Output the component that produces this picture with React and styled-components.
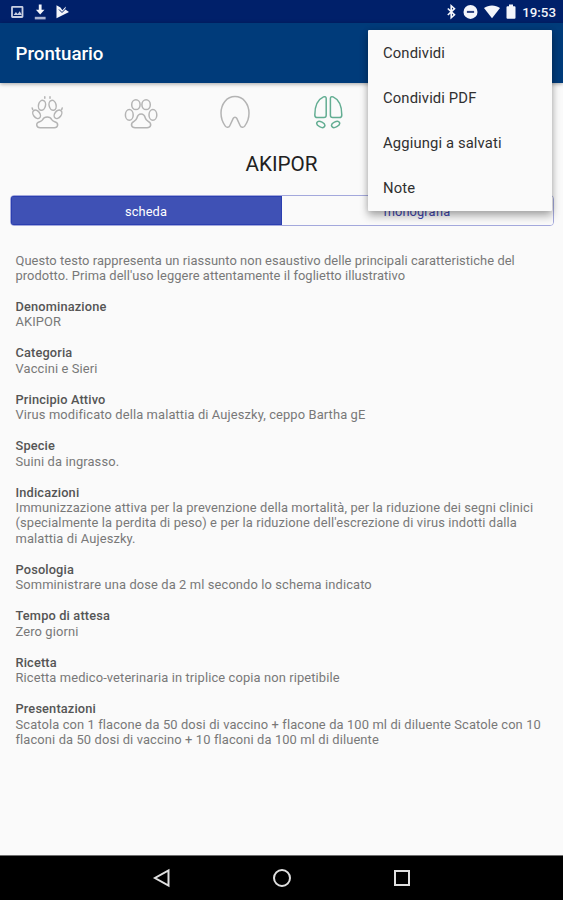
import styled, { createGlobalStyle } from "styled-components";

const GlobalStyle = createGlobalStyle`
  * {
    box-sizing: border-box;
  }

  body {
    margin: 0;
    font-family: Roboto, "Liberation Sans", sans-serif;
    background-color: #fafafa;
  }
`;

const Screen = styled.div`
  position: relative;
  display: flex;
  flex-direction: column;
  width: 563px;
  height: 900px;
  overflow: hidden;
  background-color: #fafafa;
`;

const StatusBar = styled.div`
  display: flex;
  justify-content: space-between;
  flex: 0 0 23px;
  padding: 0 7px 0 10px;
  background-color: #00206a;
  color: #f4f6fb;

  svg {
    display: block;
  }
`;

const StatusGroup = styled.div`
  display: flex;
  align-items: center;
  gap: ${(props) => props.$gap};
`;

const Clock = styled.span`
  padding-top: 2px;
  font-size: 13.3px;
  font-weight: 500;
  line-height: 21px;
`;

const AppBar = styled.header`
  display: flex;
  align-items: center;
  flex: 0 0 60px;
  padding: 2px 15.5px 0;
  background-color: #003b7a;
  box-shadow: 0 1px 4px rgba(0, 0, 0, 0.35);
  color: #fff;

  h1 {
    margin: 0;
    font-size: 18.7px;
    font-weight: 500;
  }
`;

const SpeciesRow = styled.div`
  display: grid;
  grid-template-columns: repeat(6, 1fr);
  flex: 0 0 58px;
  padding-top: 10px;
  justify-items: center;
`;

const SpeciesIcon = styled.svg`
  width: 36px;
  height: 36px;
  fill: none;
  stroke: ${(props) => (props.$active ? "#62ad92" : "#b4b4b4")};
  stroke-width: 1.5;
  stroke-linejoin: round;
  stroke-linecap: round;
`;

const ProductName = styled.h2`
  margin: 0;
  height: 46px;
  line-height: 46px;
  font-size: 20.7px;
  font-weight: 400;
  text-align: center;
  color: #212121;
`;

const Tabs = styled.div`
  display: flex;
  flex: 0 0 31px;
  margin: 8px 9px 0 10px;
  border: 1px solid #a3a8dc;
  border-radius: 4px;
  overflow: hidden;
`;

const Tab = styled.button`
  flex: 1;
  padding: 1px 1px 0 0;
  border: 0;
  font: inherit;
  font-size: 12.8px;
  letter-spacing: 0.1px;
  background-color: ${(props) => (props.$active ? "#3f51b5" : "#fafafa")};
  color: ${(props) => (props.$active ? "#fff" : "#4046ae")};
  box-shadow: ${(props) => (props.$active ? "inset 0 0 0 1px #2b3fb0" : "none")};
`;

const Sheet = styled.main`
  flex: 1;
  padding: 26.5px 15px 0 15.5px;
  font-size: 12.9px;
  line-height: 15.47px;
  color: #787878;
`;

const Section = styled.section`
  margin-bottom: 15.47px;

  h3 {
    margin: 0;
    font-size: 12.8px;
    font-weight: 500;
    letter-spacing: 0.15px;
    color: #555;
  }
`;

const Line = styled.div`
  white-space: nowrap;
  letter-spacing: ${(props) => (props.$tight ? "0.06px" : "0.12px")};
`;

const Menu = styled.div`
  position: absolute;
  top: 30px;
  left: 368px;
  width: 184px;
  height: 181px;
  background-color: #fafafa;
  border-radius: 1px;
  box-shadow: 0 5px 9px rgba(0, 0, 0, 0.3), 0 0 6px rgba(0, 0, 0, 0.12);
`;

const MenuItem = styled.div`
  height: 45px;
  padding: 0 15px;
  line-height: 46px;
  font-size: 14.8px;
  letter-spacing: 0.13px;
  color: #303030;
`;

const NavBar = styled.nav`
  display: flex;
  align-items: center;
  justify-content: center;
  gap: 98px;
  flex: 0 0 45px;
  border-top: 1px solid #6e6e6e;
  background-color: #000;

  svg {
    display: block;
    fill: none;
    stroke: #e0e0e0;
    stroke-width: 2;
  }
`;

const sections = [
  {
    tight: true,
    lines: [
      "Questo testo rappresenta un riassunto non esaustivo delle principali caratteristiche del",
      "prodotto. Prima dell'uso leggere attentamente il foglietto illustrativo",
    ],
  },
  { title: "Denominazione", lines: ["AKIPOR"] },
  { title: "Categoria", lines: ["Vaccini e Sieri"] },
  { title: "Principio Attivo", lines: ["Virus modificato della malattia di Aujeszky, ceppo Bartha gE"] },
  { title: "Specie", lines: ["Suini da ingrasso."] },
  {
    title: "Indicazioni",
    lines: [
      "Immunizzazione attiva per la prevenzione della mortalità, per la riduzione dei segni clinici",
      "(specialmente la perdita di peso) e per la riduzione dell'escrezione di virus indotti dalla",
      "malattia di Aujeszky.",
    ],
  },
  { title: "Posologia", lines: ["Somministrare una dose da 2 ml secondo lo schema indicato"] },
  { title: "Tempo di attesa", lines: ["Zero giorni"] },
  { title: "Ricetta", lines: ["Ricetta medico-veterinaria in triplice copia non ripetibile"] },
  {
    title: "Presentazioni",
    lines: [
      "Scatola con 1 flacone da 50 dosi di vaccino + flacone da 100 ml di diluente Scatole con 10",
      "flaconi da 50 dosi di vaccino + 10 flaconi da 100 ml di diluente",
    ],
  },
];

const menuItems = ["Condividi", "Condividi PDF", "Aggiungi a salvati", "Note"];

function DogPaw() {
  return (
    <SpeciesIcon viewBox="0 0 36 36">
      <ellipse cx="13" cy="12.300" rx="3.500" ry="5" transform="rotate(14 13 12.300)" />
      <ellipse cx="23.600" cy="12.300" rx="3.500" ry="5" transform="rotate(-14 23.600 12.300)" />
      <ellipse cx="7.600" cy="21.300" rx="3.200" ry="4.700" transform="rotate(-38 7.600 21.300)" />
      <ellipse cx="29" cy="21.300" rx="3.200" ry="4.700" transform="rotate(38 29 21.300)" />
      <path d="M15.800 5.300v-1.500M21 5.300v-1.500M3.700 16.500l-.5-1.500M32.700 16.500l.5-1.500" />
      <path d="M18.200 24c2.400 0 3.800 1.100 4.600 2.800 .6 1.300 1.500 1.500 3 1.900 2.300 .6 3.100 2 2.800 3.700-.3 1.600-1.500 2.300-3.300 2.300H11.100c-1.800 0-3-.7-3.300-2.300-.3-1.700.5-3.100 2.800-3.700 1.500-.4 2.400-.6 3-1.900 .8-1.700 2.200-2.800 4.600-2.800z" />
    </SpeciesIcon>
  );
}

function CatPaw() {
  return (
    <SpeciesIcon viewBox="0 0 36 36">
      <ellipse cx="12.900" cy="11.700" rx="4.200" ry="4.900" />
      <ellipse cx="23.100" cy="11.700" rx="4.200" ry="4.900" />
      <ellipse cx="6.300" cy="21.900" rx="3.900" ry="5.300" />
      <ellipse cx="29.900" cy="21.900" rx="3.900" ry="5.300" />
      <path d="M18.100 21c2.500 0 3.600 1.700 4.200 4 .4 1.600 1.400 2.400 2.900 3.300 1.900 1.100 2.900 2.500 2.400 4.300-.5 1.500-1.700 2.100-3.500 2.100h-12c-1.800 0-3-.6-3.500-2.100-.5-1.800.5-3.200 2.400-4.300 1.500-.9 2.500-1.700 2.900-3.300 .6-2.300 1.700-4 4.200-4z" />
    </SpeciesIcon>
  );
}

function HorseHoof() {
  return (
    <SpeciesIcon viewBox="0 0 36 36">
      <path d="M18 3.600c8.300 0 14 7.300 14 16.500 0 4.300-1.600 9.500-4.300 13-1.300 1.700-3.600 1.500-4.500-.4l-3.400-7.300c-.8-1.700-2.800-1.700-3.600 0l-3.400 7.300c-.9 1.900-3.200 2.100-4.500.4C5.600 29.600 4 24.400 4 20.100 4 10.900 9.700 3.600 18 3.600z" />
    </SpeciesIcon>
  );
}

function SplitHoof() {
  return (
    <SpeciesIcon viewBox="0 0 36 36" $active>
      <path d="M16.200 5.500v16.800c0 1.500-.8 2.300-2.300 2.300H7.300c-1.600 0-2.500-.9-2.500-2.600C4.800 13.500 7.500 6.600 13.500 3.900c1.700-.7 2.700.1 2.700 1.600z" />
      <path d="M20.400 5.500v16.800c0 1.500.8 2.300 2.300 2.300h6.600c1.600 0 2.500-.9 2.500-2.600 0-8.500-2.700-15.400-8.700-18.100-1.700-.7-2.700.1-2.700 1.600z" />
      <ellipse cx="10.800" cy="31.400" rx="4.300" ry="2.600" transform="rotate(28 10.800 31.400)" />
      <ellipse cx="25.600" cy="31.400" rx="4.300" ry="2.600" transform="rotate(-28 25.600 31.400)" />
    </SpeciesIcon>
  );
}

function App() {
  return (
    <>
      <GlobalStyle />
      <Screen>
        <StatusBar>
          <StatusGroup $gap="10px">
            <svg width="14" height="23" viewBox="0 0 14 23">
              <rect x="2" y="6.800" width="10.500" height="10.200" rx=".5" fill="none" stroke="#c9cfe2" strokeWidth="1.800" />
              <path d="M3.600 15l2.300-3 1.800 2 2-2.700 2.200 3.700z" fill="#c9cfe2" />
            </svg>
            <svg width="12" height="23" viewBox="0 0 12 23">
              <path d="M4.800 4.500h2.800v5.300h2.900L6.200 14.500 1.900 9.800h2.900z" fill="#f4f6fb" />
              <path d="M.8 16.800h10.800v2.600H.8z" fill="#aab4d2" />
            </svg>
            <svg width="14" height="23" viewBox="0 0 14 23">
              <path d="M.5 5.300l4 2.300 1.900 2.700L9.800 6.500l-.4 3 3.600 2.400L.5 18.200z" fill="#f4f6fb" />
              <path d="M3 9.500l3 3 5.500-5.500" fill="none" stroke="#00206a" strokeWidth="1" />
            </svg>
          </StatusGroup>
          <StatusGroup $gap="6px">
            <svg width="11" height="23" viewBox="0 0 11 23">
              <path d="M1.800 8.500l6.700 6.300-3.300 3V5.700l3.300 3-6.700 6.300" fill="none" stroke="currentColor" strokeWidth="1.600" />
            </svg>
            <svg width="15" height="23" viewBox="0 0 15 23">
              <circle cx="7.500" cy="11.900" r="7" fill="currentColor" />
              <path d="M3.900 10.900h7.200v2H3.900z" fill="#2a407f" />
            </svg>
            <svg width="16" height="23" viewBox="0 0 16 23">
              <path d="M0 8.100C4.500 4.700 11.500 4.700 16 8.100L8 18.300z" fill="currentColor" />
            </svg>
            <svg width="10" height="23" viewBox="0 0 10 23">
              <path d="M3 4.500h4v1.800h1.500q1 0 1 1v10.400q0 1-1 1h-7q-1 0-1-1V7.300q0-1 1-1H3z" fill="currentColor" />
            </svg>
            <Clock>19:53</Clock>
          </StatusGroup>
        </StatusBar>
        <AppBar>
          <h1>Prontuario</h1>
        </AppBar>
        <SpeciesRow>
          <DogPaw />
          <CatPaw />
          <HorseHoof />
          <SplitHoof />
        </SpeciesRow>
        <ProductName>AKIPOR</ProductName>
        <Tabs>
          <Tab $active>scheda</Tab>
          <Tab>monografia</Tab>
        </Tabs>
        <Sheet>
          {sections.map((section, index) => (
            <Section key={index}>
              {section.title && <h3>{section.title}</h3>}
              {section.lines.map((line) => (
                <Line key={line} $tight={section.tight}>
                  {line}
                </Line>
              ))}
            </Section>
          ))}
        </Sheet>
        <NavBar>
          <svg width="22" height="22" viewBox="0 0 22 22">
            <path d="M17.500 3.500v15L4 11z" />
          </svg>
          <svg width="22" height="22" viewBox="0 0 22 22">
            <circle cx="11" cy="11" r="8" />
          </svg>
          <svg width="22" height="22" viewBox="0 0 22 22">
            <rect x="4" y="4" width="14" height="14" />
          </svg>
        </NavBar>
        <Menu>
          {menuItems.map((item) => (
            <MenuItem key={item}>{item}</MenuItem>
          ))}
        </Menu>
      </Screen>
    </>
  );
}

export default App;
